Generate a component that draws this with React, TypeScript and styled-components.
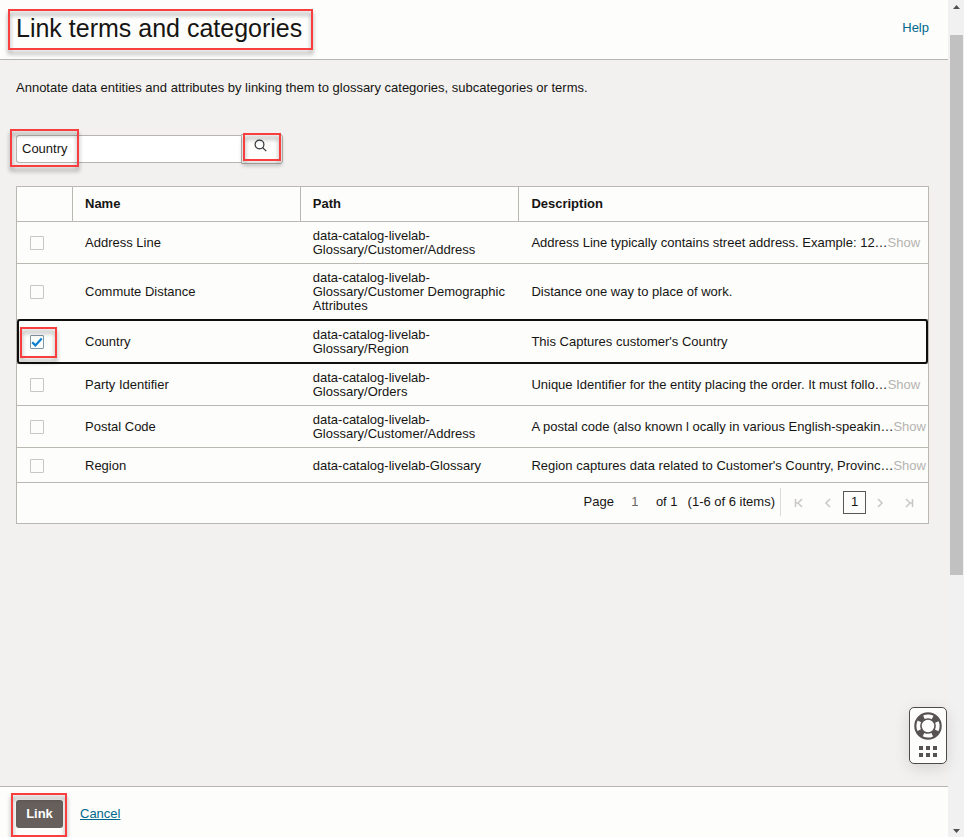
import React, { useState } from "react";
import styled, { createGlobalStyle } from "styled-components";

const GlobalStyle = createGlobalStyle`
  *, *::before, *::after { box-sizing: border-box; }
  body { margin: 0; }
  body, button, input {
    font-family: "Liberation Sans", Arial, sans-serif;
    font-size: 13px;
    line-height: 14px;
    color: #161513;
  }
`;

const Window = styled.div`
  display: grid;
  grid-template-columns: minmax(0, 1fr) 16px;
  min-height: 100vh;
  background: #f2f1ef;
`;

const Page = styled.div`
  position: relative;
  display: flex;
  flex-direction: column;
`;

const Header = styled.header`
  display: flex;
  align-items: center;
  justify-content: space-between;
  height: 60px;
  padding: 0 19px 4px 16px;
  background: #fdfdfb;
  border-bottom: 1px solid #b8b5b0;
`;

const Title = styled.h1`
  position: relative;
  margin: 0;
  font-size: 25px;
  line-height: 32px;
  font-weight: 400;
`;

const Anchor = styled.a<{ $underlined?: boolean }>`
  color: #00688c;
  text-decoration: ${(p) => (p.$underlined ? "underline" : "none")};
  text-underline-offset: 1px;
`;

const Callout = styled.span<{ $inset: string; $width?: string }>`
  position: absolute;
  inset: ${(p) => p.$inset};
  width: ${(p) => p.$width ?? "auto"};
  border: 2px solid #f93e40;
  filter: drop-shadow(0 4px 2px rgba(0, 0, 0, 0.4));
  pointer-events: none;
  z-index: 2;
`;

const Main = styled.main`
  flex: 1;
  padding: 20px 19px 20px 16px;
`;

const Intro = styled.p`
  margin: 0;
  line-height: 16px;
`;

const SearchForm = styled.form`
  display: flex;
  align-items: center;
  margin: 38px 0 22px;
`;

const SearchField = styled.div`
  position: relative;
  width: 225px;
`;

const SearchInput = styled.input`
  display: block;
  width: 100%;
  height: 28px;
  padding: 0 5px 2px;
  background: #fff;
  border: 1px solid #b8b5b0;
  border-right: 0;
  border-radius: 3px 0 0 3px;
  outline: none;
`;

const SearchButton = styled.button`
  position: relative;
  display: flex;
  align-items: center;
  justify-content: center;
  width: 42px;
  height: 30px;
  padding: 0 3px 7px 0;
  background: #fdfdfb;
  border: 1px solid #b8b5b0;
  border-radius: 0 3px 3px 0;
`;

const Panel = styled.section`
  background: #fdfdfb;
  border: 1px solid #bbb8b1;
`;

const Table = styled.table`
  width: 100%;
  table-layout: fixed;
  border-collapse: separate;
  border-spacing: 0;
`;

const Col = styled.col<{ $width?: string }>`
  width: ${(p) => p.$width ?? "auto"};
`;

const HeadCell = styled.th`
  height: 35px;
  padding: 0 12px;
  text-align: left;
  font-weight: 700;
  border-bottom: 1px solid #bbb8b1;
  &:not(:last-child) { border-right: 1px solid #bbb8b1; }
`;

const Cell = styled.td`
  padding: 7px 12px 6px;
  vertical-align: middle;
  border-bottom: 1px solid #bbb8b1;
`;

const Row = styled.tr<{ $focused: boolean }>`
  position: relative;
  height: ${(p) => (p.$focused ? "44px" : "35px")};
  ${Cell}:first-child::after {
    content: "";
    display: ${(p) => (p.$focused ? "block" : "none")};
    position: absolute;
    inset: -1px 0 0 0;
    border: 2px solid #100f0e;
    border-radius: 3px;
    pointer-events: none;
  }
`;

const DescriptionLine = styled.div`
  display: flex;
  margin-right: -12px;
`;

const DescriptionText = styled.span`
  flex: 1 0 auto;
  white-space: nowrap;
`;

const ShowButton = styled.button`
  flex: 0 1 46px;
  min-width: 0;
  padding: 0;
  border: 0;
  background: none;
  color: #b5b3b0;
  text-align: left;
`;

const CheckWrap = styled.label`
  position: relative;
  display: block;
  width: 14px;
  height: 14px;
  margin-left: 1px;
`;

const CheckInput = styled.input`
  appearance: none;
  display: block;
  width: 14px;
  height: 14px;
  margin: 0;
  background: #fdfdfb;
  border: 1px solid #c4c6c8;
  border-radius: 1px;
  &:checked { border-color: #7f97a6; }
`;

const CheckMark = styled.svg`
  position: absolute;
  inset: 0;
  pointer-events: none;
`;

const Pager = styled.div`
  display: flex;
  align-items: center;
  justify-content: flex-end;
  height: 40px;
  padding: 0 9px 2px 0;
`;

const PageLabel = styled.label`
  display: flex;
  align-items: center;
`;

const PageInput = styled.input`
  width: 22px;
  margin: 0 10px;
  padding: 0;
  border: 0;
  background: none;
  text-align: center;
  color: #6b6762;
`;

const PageCount = styled.span`
  margin-right: 10px;
`;

const PagerNav = styled.nav`
  display: flex;
  align-items: center;
  height: 28px;
  margin-left: 5px;
  padding-left: 8px;
  border-left: 1px solid #dddbd8;
`;

const PagerButton = styled.button<{ $current?: boolean }>`
  display: flex;
  align-items: center;
  justify-content: center;
  width: ${(p) => (p.$current ? "23px" : "20px")};
  height: 23px;
  margin-right: ${(p) => (p.$current ? "4px" : "9px")};
  padding: ${(p) => (p.$current ? "0" : "1px 0 0")};
  border: ${(p) => (p.$current ? "1px solid #5b5854" : "0")};
  background: none;
  &:nth-child(2) { margin-right: 5px; }
  &:last-child { margin-right: 0; }
`;

const Footer = styled.footer`
  display: flex;
  align-items: center;
  gap: 17px;
  height: 51px;
  padding: 4px 16px 0;
  background: #fdfdfb;
  border-top: 1px solid #b8b5b0;
`;

const LinkAction = styled.span`
  position: relative;
`;

const PrimaryButton = styled.button`
  display: block;
  width: 47px;
  height: 28px;
  padding: 0;
  border: 0;
  border-radius: 3px;
  background: #665f5b;
  color: #fff;
  font-weight: 700;
`;

const SupportButton = styled.button`
  position: absolute;
  right: 1px;
  bottom: 73px;
  display: flex;
  width: 38px;
  height: 57px;
  padding: 0;
  align-items: center;
  justify-content: center;
  border: 1px solid #4d4a47;
  border-radius: 5px;
  background: #fdfdfb;
  box-shadow: 0 4px 16px rgba(0, 0, 0, 0.12);
`;

const ScrollBar = styled.div`
  display: grid;
  grid-template-rows: 35px 540fr 244fr 18px;
  background: #f1f1f1;
  justify-items: center;
`;

const ScrollThumb = styled.div`
  width: 13px;
  margin-left: 1px;
  background: #c1c1c1;
`;

const ScrollArrow = styled.svg`
  display: block;
  grid-column: 1;
`;

type Term = {
  name: string;
  path: string;
  description: string;
  more: boolean;
};

const terms: Term[] = [
  { name: "Address Line", path: "data-catalog-livelab-Glossary/Customer/Address", description: "Address Line typically contains street address. Example: 12…", more: true },
  { name: "Commute Distance", path: "data-catalog-livelab-Glossary/Customer Demographic Attributes", description: "Distance one way to place of work.", more: false },
  { name: "Country", path: "data-catalog-livelab-Glossary/Region", description: "This Captures customer's Country", more: false },
  { name: "Party Identifier", path: "data-catalog-livelab-Glossary/Orders", description: "Unique Identifier for the entity placing the order. It must follo…", more: true },
  { name: "Postal Code", path: "data-catalog-livelab-Glossary/Customer/Address", description: "A postal code (also known l ocally in various English-speakin…", more: true },
  { name: "Region", path: "data-catalog-livelab-Glossary", description: "Region captures data related to Customer's Country, Provinc…", more: true },
];

const pagerPaths = {
  first: "M1.5 1v8M8 1L4 5l4 4M2 5h2",
  previous: "M7 1L3 5l4 4",
  next: "M3 1l4 4-4 4",
  last: "M8.5 1v8M2 1l4 4-4 4M6 5h2",
};

function PagerIcon({ d }: { d: string }) {
  return (
    <svg width="10" height="10" viewBox="0 0 10 10" fill="none" stroke="#c9c7c4" strokeWidth="1.5" aria-hidden="true">
      <path d={d} />
    </svg>
  );
}

function SupportIcon() {
  return (
    <svg width="28" height="47" viewBox="0 0 28 47" aria-hidden="true">
      <circle cx="14" cy="14" r="10" fill="none" stroke="#575350" strokeWidth="7.5" />
      <circle cx="14" cy="14" r="9.7" fill="none" stroke="#fdfdfb" strokeWidth="3.8" strokeDasharray="9 6.24" strokeDashoffset="4.5" />
      {[34, 41].map((y) =>
        [5, 12, 19].map((x) => <rect key={`${x}-${y}`} x={x} y={y} width="4" height="4" fill="#575350" />)
      )}
    </svg>
  );
}

export default function App() {
  const [query, setQuery] = useState("Country");
  const [selected, setSelected] = useState("Country");

  return (
    <>
      <GlobalStyle />
      <Window>
        <Page>
          <Header>
            <Title>
              Link terms and categories
              <Callout $inset="-3px -11px -6px -8px" />
            </Title>
            <Anchor href="#help">Help</Anchor>
          </Header>
          <Main>
            <Intro>Annotate data entities and attributes by linking them to glossary categories, subcategories or terms.</Intro>
            <SearchForm role="search" onSubmit={(e) => e.preventDefault()}>
              <SearchField>
                <SearchInput aria-label="Search terms" value={query} onChange={(e) => setQuery(e.target.value)} />
                <Callout $inset="-6px auto -4px -6px" $width="69px" />
              </SearchField>
              <SearchButton type="submit" aria-label="Search">
                <svg width="13" height="13" viewBox="0 0 13 13" fill="none" stroke="#33383c" strokeWidth="1.2" aria-hidden="true">
                  <circle cx="5.5" cy="5.5" r="4.4" />
                  <path d="M8.7 8.7l3.6 3.4" />
                </svg>
                <Callout $inset="-2px 1px 2px 1px" />
              </SearchButton>
            </SearchForm>
            <Panel>
              <Table>
                <colgroup>
                  <Col $width="56px" />
                  <Col $width="25%" />
                  <Col $width="24%" />
                  <Col />
                </colgroup>
                <thead>
                  <tr>
                    <HeadCell aria-label="Selected" />
                    <HeadCell scope="col">Name</HeadCell>
                    <HeadCell scope="col">Path</HeadCell>
                    <HeadCell scope="col">Description</HeadCell>
                  </tr>
                </thead>
                <tbody>
                  {terms.map((term) => {
                    const checked = term.name === selected;
                    return (
                      <Row key={term.name} $focused={checked}>
                        <Cell>
                          <CheckWrap>
                            <CheckInput
                              type="checkbox"
                              aria-label={`Select ${term.name}`}
                              checked={checked}
                              onChange={() => setSelected(checked ? "" : term.name)}
                            />
                            {checked && (
                              <>
                                <CheckMark width="14" height="14" viewBox="0 0 14 14" fill="none" stroke="#0a7fd0" strokeWidth="2.2" aria-hidden="true">
                                  <path d="M2.2 7.2l3.2 3.2 6.3-6.8" />
                                </CheckMark>
                                <Callout $inset="-8px -13px -9px -10px" />
                              </>
                            )}
                          </CheckWrap>
                        </Cell>
                        <Cell>{term.name}</Cell>
                        <Cell>{term.path}</Cell>
                        <Cell>
                          <DescriptionLine>
                            <DescriptionText>{term.description}</DescriptionText>
                            {term.more && <ShowButton type="button">Show</ShowButton>}
                          </DescriptionLine>
                        </Cell>
                      </Row>
                    );
                  })}
                </tbody>
              </Table>
              <Pager>
                <PageLabel>
                  Page
                  <PageInput defaultValue="1" />
                </PageLabel>
                <PageCount>of 1</PageCount>
                <span>(1-6 of 6 items)</span>
                <PagerNav aria-label="Pages">
                  <PagerButton type="button" aria-label="First page"><PagerIcon d={pagerPaths.first} /></PagerButton>
                  <PagerButton type="button" aria-label="Previous page"><PagerIcon d={pagerPaths.previous} /></PagerButton>
                  <PagerButton type="button" $current aria-current="page">1</PagerButton>
                  <PagerButton type="button" aria-label="Next page"><PagerIcon d={pagerPaths.next} /></PagerButton>
                  <PagerButton type="button" aria-label="Last page"><PagerIcon d={pagerPaths.last} /></PagerButton>
                </PagerNav>
              </Pager>
            </Panel>
          </Main>
          <Footer>
            <LinkAction>
              <PrimaryButton type="button">Link</PrimaryButton>
              <Callout $inset="-7px -4px -9px -5px" />
            </LinkAction>
            <Anchor href="#cancel" $underlined>Cancel</Anchor>
          </Footer>
          <SupportButton type="button" aria-label="Support"><SupportIcon /></SupportButton>
        </Page>
        <ScrollBar aria-hidden="true">
          <ScrollArrow width="16" height="16" viewBox="0 0 16 16"><path d="M5 9l3.5-4L12 9z" fill="#505050" /></ScrollArrow>
          <ScrollThumb />
          <span />
          <ScrollArrow width="16" height="18" viewBox="0 0 16 18"><path d="M5 10l3.5 4 3.5-4z" fill="#505050" /></ScrollArrow>
        </ScrollBar>
      </Window>
    </>
  );
}
